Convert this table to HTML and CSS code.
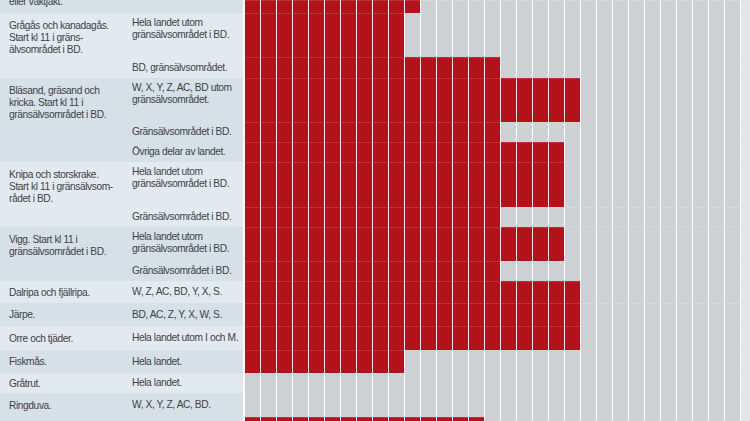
FILE: index.html
```html
<!DOCTYPE html>
<html lang="sv">
<head>
<meta charset="utf-8">
<title>Jakttider</title>
<link rel="stylesheet" href="styles.css">
</head>
<body>
<div class="page">
  <div class="table">
    <div class="group dark">
      <div class="species clip"><p>eller vaktjakt.</p></div>
      <div class="subs">
        <div class="sub h13"><div class="region"></div><div class="weeks" style="--n:11"></div></div>
      </div>
    </div>
    <div class="group light">
      <div class="species">Grågås och kanadagås.<br>Start kl 11 i gräns-<br>älvsområdet i BD.</div>
      <div class="subs">
        <div class="sub h44"><div class="region top">Hela landet utom<br>gränsälvsområdet i BD.</div><div class="weeks" style="--n:10"></div></div>
        <div class="sub h21"><div class="region">BD, gränsälvsområdet.</div><div class="weeks" style="--n:16"></div></div>
      </div>
    </div>
    <div class="group dark">
      <div class="species">Bläsand, gräsand och<br>kricka. Start kl 11 i<br>gränsälvsområdet i BD.</div>
      <div class="subs">
        <div class="sub h44"><div class="region top">W, X, Y, Z, AC, BD utom<br>gränsälvsområdet.</div><div class="weeks" style="--n:21"></div></div>
        <div class="sub h20"><div class="region">Gränsälvsområdet i BD.</div><div class="weeks" style="--n:16"></div></div>
        <div class="sub h20"><div class="region">Övriga delar av landet.</div><div class="weeks" style="--n:20"></div></div>
      </div>
    </div>
    <div class="group light">
      <div class="species">Knipa och storskrake.<br>Start kl 11 i gränsälvsom-<br>rådet i BD.</div>
      <div class="subs">
        <div class="sub h45"><div class="region top">Hela landet utom<br>gränsälvsområdet i BD.</div><div class="weeks" style="--n:20"></div></div>
        <div class="sub h20"><div class="region">Gränsälvsområdet i BD.</div><div class="weeks" style="--n:16"></div></div>
      </div>
    </div>
    <div class="group dark">
      <div class="species">Vigg. Start kl 11 i<br>gränsälvsområdet i BD.</div>
      <div class="subs">
        <div class="sub h34"><div class="region top">Hela landet utom<br>gränsälvsområdet i BD.</div><div class="weeks" style="--n:20"></div></div>
        <div class="sub h20"><div class="region">Gränsälvsområdet i BD.</div><div class="weeks" style="--n:16"></div></div>
      </div>
    </div>
    <div class="group light">
      <div class="species mid">Dalripa och fjällripa.</div>
      <div class="subs">
        <div class="sub h22"><div class="region">W, Z, AC, BD, Y, X, S.</div><div class="weeks" style="--n:21"></div></div>
      </div>
    </div>
    <div class="group dark">
      <div class="species mid">Järpe.</div>
      <div class="subs">
        <div class="sub h23"><div class="region">BD, AC, Z, Y, X, W, S.</div><div class="weeks" style="--n:21"></div></div>
      </div>
    </div>
    <div class="group light">
      <div class="species mid">Orre och tjäder.</div>
      <div class="subs">
        <div class="sub h24"><div class="region">Hela landet utom I och M.</div><div class="weeks" style="--n:21"></div></div>
      </div>
    </div>
    <div class="group dark">
      <div class="species mid">Fiskmås.</div>
      <div class="subs">
        <div class="sub h23"><div class="region">Hela landet.</div><div class="weeks" style="--n:10"></div></div>
      </div>
    </div>
    <div class="group light">
      <div class="species mid">Gråtrut.</div>
      <div class="subs">
        <div class="sub h20"><div class="region">Hela landet.</div><div class="weeks" style="--n:0"></div></div>
      </div>
    </div>
    <div class="group dark">
      <div class="species ring">Ringduva.</div>
      <div class="subs">
        <div class="sub h24"><div class="region">W, X, Y, Z, AC, BD.</div><div class="weeks" style="--n:0"></div></div>
        <div class="sub h10"><div class="region"></div><div class="weeks" style="--n:15"></div></div>
      </div>
    </div>
  </div>
  <div class="edge"></div>
</div>
</body>
</html>
```

FILE: styles.css
```css
* {
  box-sizing: border-box;
  margin: 0;
  padding: 0;
}

body {
  margin: 0;
  background: #ffffff;
  font-family: "Liberation Sans", Arial, sans-serif;
  font-size: 10.2px;
  line-height: 12px;
  letter-spacing: -0.4px;
  color: #3e4246;
  overflow: hidden;
}

.page {
  display: flex;
  width: 750px;
  height: 421px;
  overflow: hidden;
}

.table {
  flex: none;
  width: 741px;
  display: flex;
  flex-direction: column;
}

.edge {
  flex: none;
  width: 9px;
  background: #e2e7eb;
}

.group {
  flex: none;
  display: flex;
}

.group.dark {
  --bg: #d6e0e7;
}

.group.light {
  --bg: #e3eaef;
}

.species {
  flex: none;
  width: 123px;
  padding: 7px 0 0 9px;
  background: var(--bg);
  white-space: nowrap;
}

.species.mid {
  display: flex;
  align-items: center;
  padding-top: 1px;
}

.species.ring {
  padding-top: 7px;
}

.species.clip {
  overflow: hidden;
  padding-top: 0;
}

.species.clip p {
  margin-top: -4px;
}

.subs {
  display: flex;
  flex-direction: column;
}

.sub {
  display: flex;
}

.h10 { height: 10px; }
.h13 { height: 13px; }
.h20 { height: 20px; }
.h21 { height: 21px; }
.h22 { height: 22px; }
.h23 { height: 23px; }
.h24 { height: 24px; }
.h34 { height: 34px; }
.h44 { height: 44px; }
.h45 { height: 45px; }

.region {
  flex: none;
  width: 120px;
  padding-left: 9px;
  background: var(--bg);
  display: flex;
  align-items: center;
  white-space: nowrap;
}

.region.top {
  align-items: flex-start;
  padding-top: 4px;
}

.weeks {
  flex: none;
  width: 496px;
  margin-left: 2px;
  background:
    repeating-linear-gradient(90deg, transparent 0 15px, #ffffff 15px 16px),
    linear-gradient(90deg, #b4121b calc(var(--n) * 16px), #cdd1d4 0);
  box-shadow: inset 0 1px 0 rgba(255, 255, 255, 0.12);
}
```
